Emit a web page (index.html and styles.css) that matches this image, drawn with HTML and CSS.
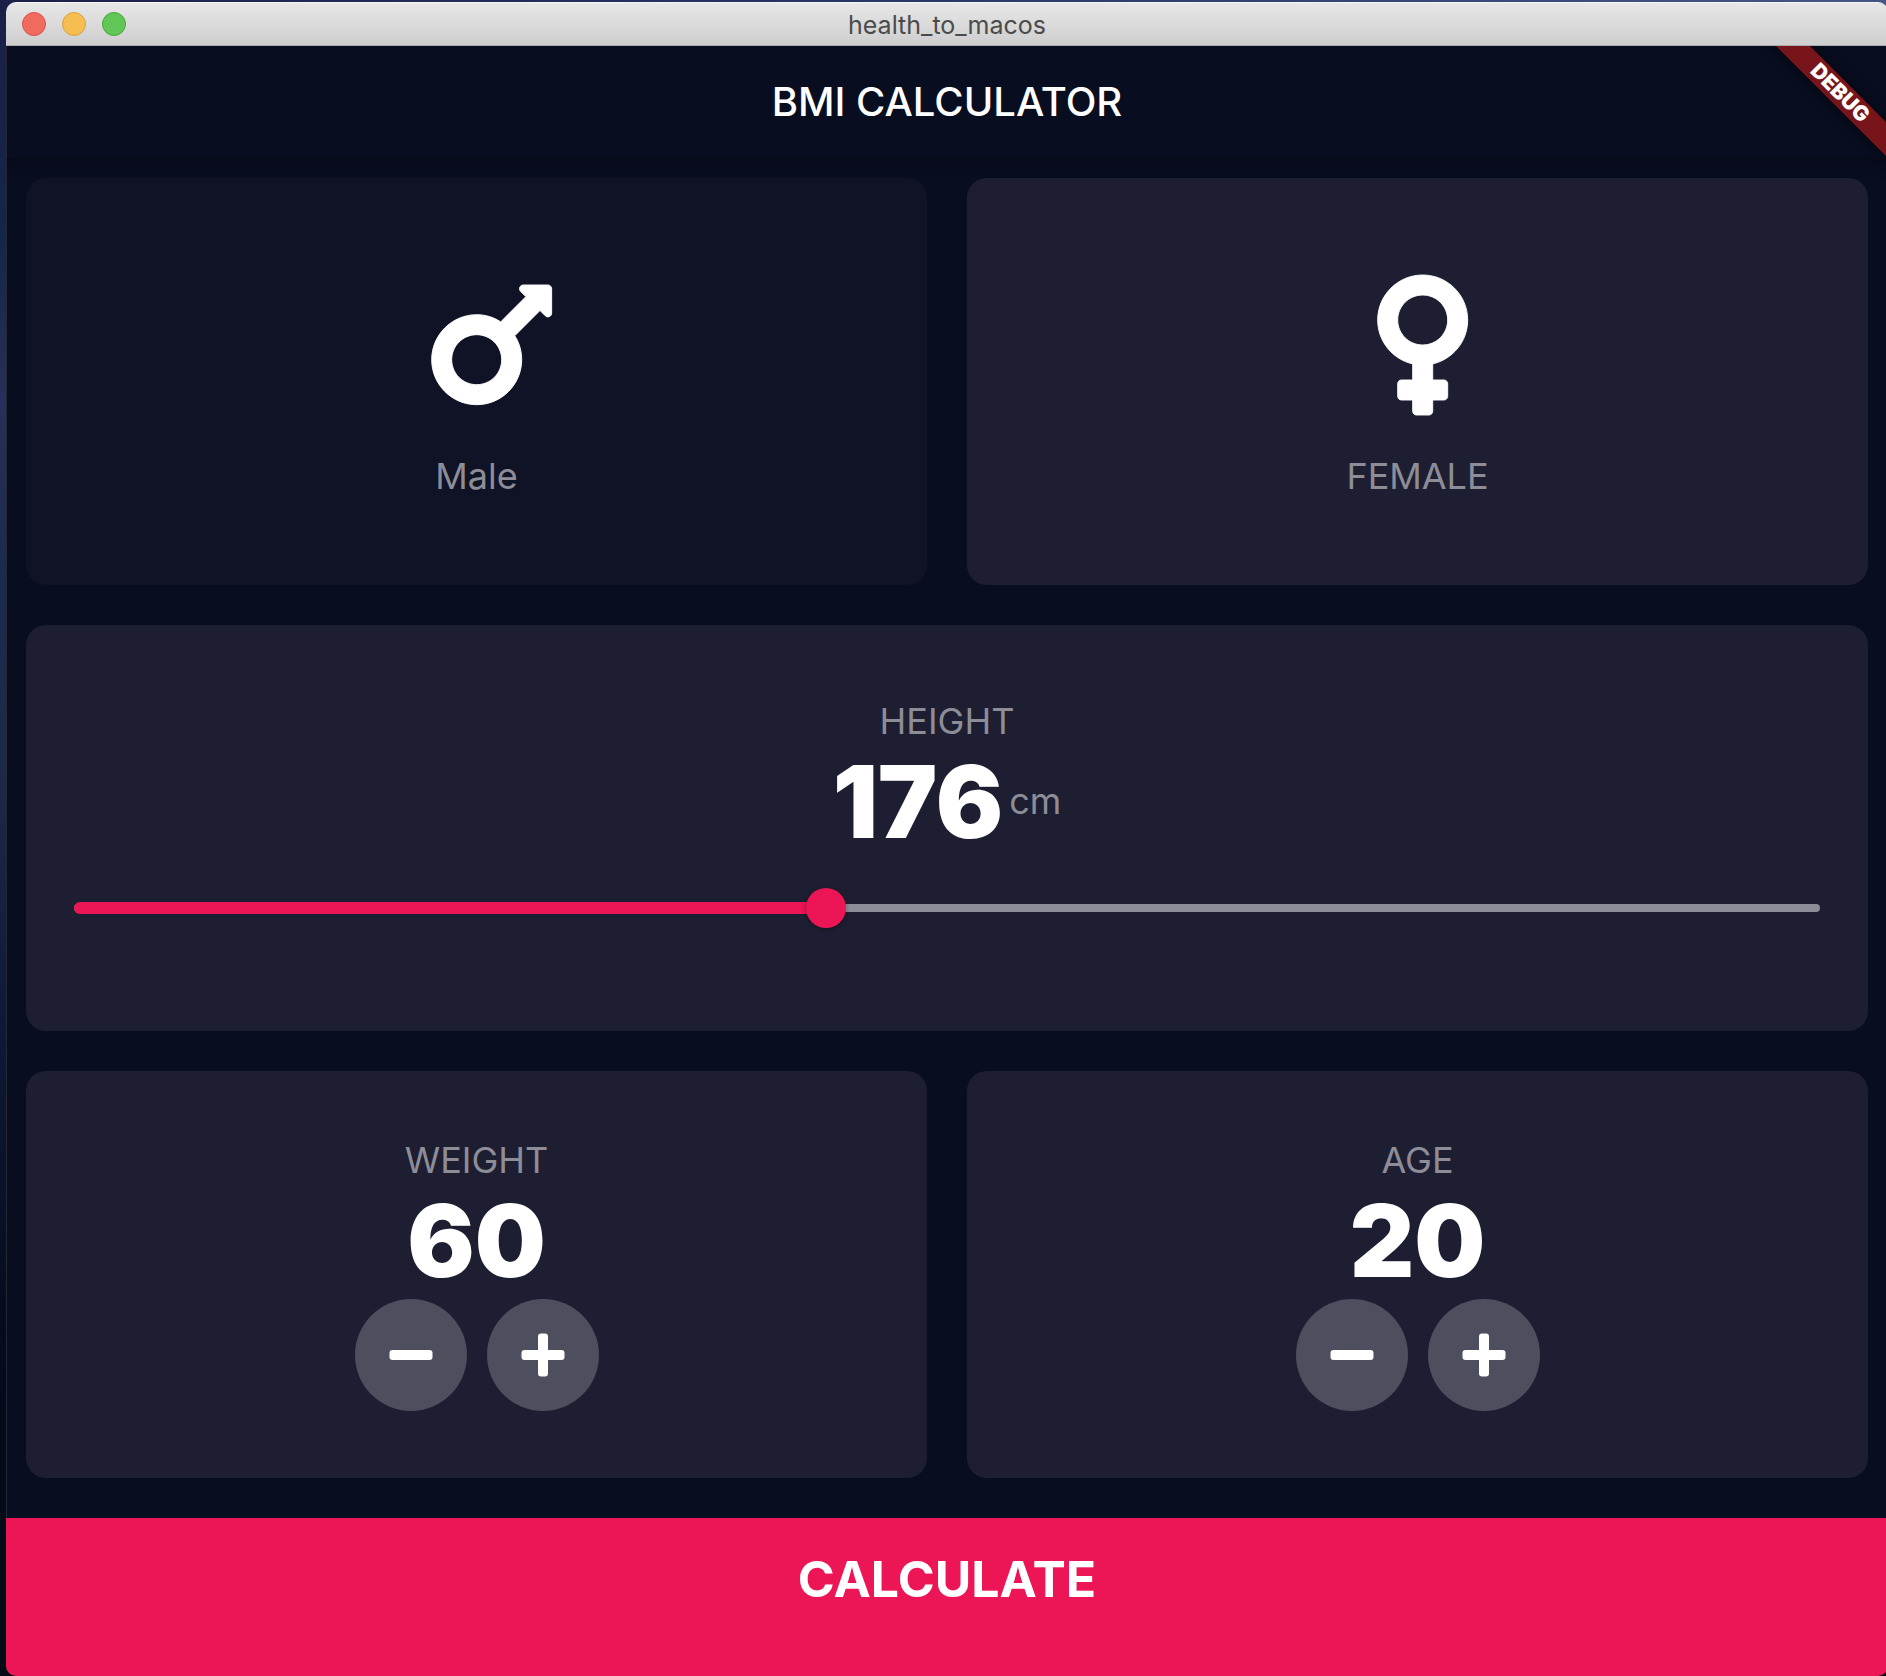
FILE: index.html
```html
<!DOCTYPE html>
<html lang="en">
<head>
<meta charset="utf-8">
<meta name="viewport" content="width=device-width, initial-scale=1">
<title>health_to_macos</title>
<link rel="stylesheet" href="styles.css">
</head>
<body>
<div class="window">
  <header class="titlebar">
    <div class="lights">
      <button class="light close" type="button" aria-label="Close"></button>
      <button class="light minimize" type="button" aria-label="Minimize"></button>
      <button class="light zoom" type="button" aria-label="Zoom"></button>
    </div>
    <span class="window-title">health_to_macos</span>
  </header>
  <div class="app">
    <div class="appbar"><h1 class="app-title">BMI CALCULATOR</h1></div>
    <main class="cards">
      <button class="card card-inactive" type="button">
        <svg class="gender-icon" viewBox="0 0 512 512" aria-hidden="true"><path transform="translate(111 0)" d="M372 64h-79c-10.700 0-16 12.900-8.500 20.400l16.900 16.900-80.700 80.700C198.500 167.100 172.200 159 144 159 64.500 159 0 223.500 0 303s64.500 144 144 144 144-64.500 144-144c0-28.200-8.100-54.500-22.100-76.700l80.700-80.700 16.900 16.900c7.600 7.600 20.400 2.200 20.400-8.500V76c0-6.600-5.300-12-11.900-12zM144 383c-44.100 0-80-35.900-80-80s35.900-80 80-80 80 35.900 80 80-35.900 80-80 80z"/></svg>
        <span class="label gender-label">Male</span>
      </button>
      <button class="card" type="button">
        <svg class="gender-icon" viewBox="0 0 512 512" aria-hidden="true"><path transform="translate(127 0)" d="M288 176c0-79.500-64.500-144-144-144S0 96.500 0 176c0 68.500 47.900 125.900 112 140.400V368H76c-6.600 0-12 5.400-12 12v40c0 6.600 5.400 12 12 12h36v36c0 6.600 5.400 12 12 12h40c6.600 0 12-5.400 12-12v-36h36c6.600 0 12-5.400 12-12v-40c0-6.600-5.400-12-12-12h-36v-51.600c64.100-14.600 112-71.900 112-140.400zm-224 0c0-44.100 35.900-80 80-80s80 35.900 80 80-35.900 80-80 80-80-35.900-80-80z"/></svg>
        <span class="label gender-label">FEMALE</span>
      </button>
      <section class="card card-wide">
        <label class="label" for="height">HEIGHT</label>
        <div class="reading"><output class="number" for="height">176</output><span class="label">cm</span></div>
        <div class="slider" style="--fill: 43.08%">
          <input class="slider-input" id="height" type="range" min="120" max="250" value="176">
        </div>
      </section>
      <section class="card">
        <h2 class="label">WEIGHT</h2>
        <output class="number">60</output>
        <div class="steppers">
          <button class="stepper" type="button" aria-label="Decrease weight"><svg class="stepper-icon" viewBox="0 0 44 44" aria-hidden="true"><rect x="0.500" y="17" width="43" height="10" rx="3"/></svg></button>
          <button class="stepper" type="button" aria-label="Increase weight"><svg class="stepper-icon" viewBox="0 0 44 44" aria-hidden="true"><rect x="0.500" y="17" width="43" height="10" rx="3"/><rect x="17" y="0.500" width="10" height="43" rx="3"/></svg></button>
        </div>
      </section>
      <section class="card">
        <h2 class="label">AGE</h2>
        <output class="number">20</output>
        <div class="steppers">
          <button class="stepper" type="button" aria-label="Decrease age"><svg class="stepper-icon" viewBox="0 0 44 44" aria-hidden="true"><rect x="0.500" y="17" width="43" height="10" rx="3"/></svg></button>
          <button class="stepper" type="button" aria-label="Increase age"><svg class="stepper-icon" viewBox="0 0 44 44" aria-hidden="true"><rect x="0.500" y="17" width="43" height="10" rx="3"/><rect x="17" y="0.500" width="10" height="43" rx="3"/></svg></button>
        </div>
      </section>
    </main>
    <button class="calculate" type="button">CALCULATE</button>
    <div class="debug-banner">DEBUG</div>
  </div>
</div>
</body>
</html>
```

FILE: styles.css
```css
* {
  box-sizing: border-box;
}

body {
  margin: 0;
  min-height: 100vh;
  display: flex;
  overflow-x: hidden;
  padding: 2px 0 0 6px;
  background:
    linear-gradient(90deg, #1b2048, #2a3768 50%, #465588) top / 100% 16px no-repeat,
    linear-gradient(#1b2048, #14254a 14%, #27305a 24%, #1b2a50 34%, #1c2a48 46%, #0e1a38 60%, #050b1c 80%, #040a16);
  font-family: Inter, "Liberation Sans", sans-serif;
}

button {
  font: inherit;
  border: 0;
  padding: 0;
  cursor: pointer;
}

/* The window runs just past the right edge of the screen */
.window {
  flex: 1;
  display: flex;
  flex-direction: column;
  margin-right: -2px;
  border-radius: 10px;
  overflow: hidden;
}

.titlebar {
  display: grid;
  grid-template-columns: 1fr auto 1fr;
  align-items: center;
  height: 44px;
  padding: 0 16px;
  background: linear-gradient(#e7e7e7, #cecece);
  border-top: 1px solid #f6f6f6;
  border-bottom: 1px solid #acacac;
}

.lights {
  display: flex;
  gap: 16px;
}

.light {
  width: 24px;
  height: 24px;
  border-radius: 50%;
}

.close {
  background: #ef6b5f;
  border: 1px solid #dc5047;
}

.minimize {
  background: #f6be50;
  border: 1px solid #dd9f3b;
}

.zoom {
  background: #61c655;
  border: 1px solid #4aa73c;
}

.window-title {
  padding-top: 2px;
  color: #4b4b4b;
  font-size: 25px;
  line-height: 32px;
}

.app {
  position: relative;
  flex: 1;
  display: flex;
  flex-direction: column;
  overflow: hidden;
  background: linear-gradient(90deg, #252733 1px, #080d1f 1px);
}

.appbar {
  display: flex;
  align-items: center;
  justify-content: center;
  height: 112px;
  box-shadow: 0 2px 12px rgba(9, 9, 18, 0.7);
}

.app-title {
  margin: 0;
  color: #fff;
  font-size: 40px;
  font-weight: 500;
  line-height: 48px;
}

.cards {
  flex: 1;
  display: grid;
  grid-template-columns: 1fr 1fr;
  grid-auto-rows: 1fr;
  gap: 40px;
  padding: 20px 20px 40px;
}

.card {
  display: flex;
  flex-direction: column;
  align-items: center;
  justify-content: center;
  border-radius: 20px;
  background: #1e1e32;
}

.card-inactive {
  background: #101226;
}

.card-wide {
  grid-column: 1 / -1;
}

.gender-icon {
  width: 160px;
  height: 160px;
  fill: #fff;
  stroke: #fff;
  stroke-width: 3px;
}

.gender-label {
  margin-top: 30px;
}

.label {
  margin-bottom: 0;
  color: #8d8d97;
  font-size: 36px;
  font-weight: 400;
  line-height: 43px;
}

h2.label {
  margin-top: 0;
}

.number {
  color: #fff;
  font-size: 100px;
  font-weight: 900;
  line-height: 117px;
}

.reading {
  display: flex;
  align-items: center;
  gap: 6px;
}

.slider {
  align-self: stretch;
  display: grid;
  align-items: center;
  height: 96px;
  margin: 0 48px;
}

.slider::before,
.slider::after {
  content: "";
  grid-area: 1 / 1;
  height: 8px;
  border-radius: 6px;
  background: #8d8d97;
}

.slider::after {
  width: var(--fill);
  height: 12px;
  background: #ec1555;
}

.slider-input {
  grid-area: 1 / 1;
  z-index: 1;
  height: 40px;
  margin: 0 -20px;
  appearance: none;
  background: transparent;
}

.slider-input::-webkit-slider-thumb {
  appearance: none;
  width: 40px;
  height: 40px;
  border-radius: 50%;
  background: #ec1555;
  box-shadow: 0 1px 4px rgba(0, 0, 0, 0.4);
}

.steppers {
  display: flex;
  gap: 20px;
}

.stepper {
  display: grid;
  place-items: center;
  width: 112px;
  height: 112px;
  border-radius: 50%;
  background: #4d4f5e;
}

.stepper-icon {
  width: 44px;
  height: 44px;
  fill: #fff;
}

.calculate {
  height: 158px;
  padding-bottom: 36px;
  background: #ec1555;
  color: #fff;
  font-size: 50px;
  font-weight: 700;
  line-height: 60px;
}

.debug-banner {
  position: absolute;
  top: 35px;
  right: -52px;
  width: 200px;
  background: #77151b;
  box-shadow: 0 0 12px rgba(0, 0, 0, 0.5);
  color: #fff;
  font-size: 21px;
  font-weight: 900;
  line-height: 24px;
  text-align: center;
  transform: rotate(45deg);
}
```
